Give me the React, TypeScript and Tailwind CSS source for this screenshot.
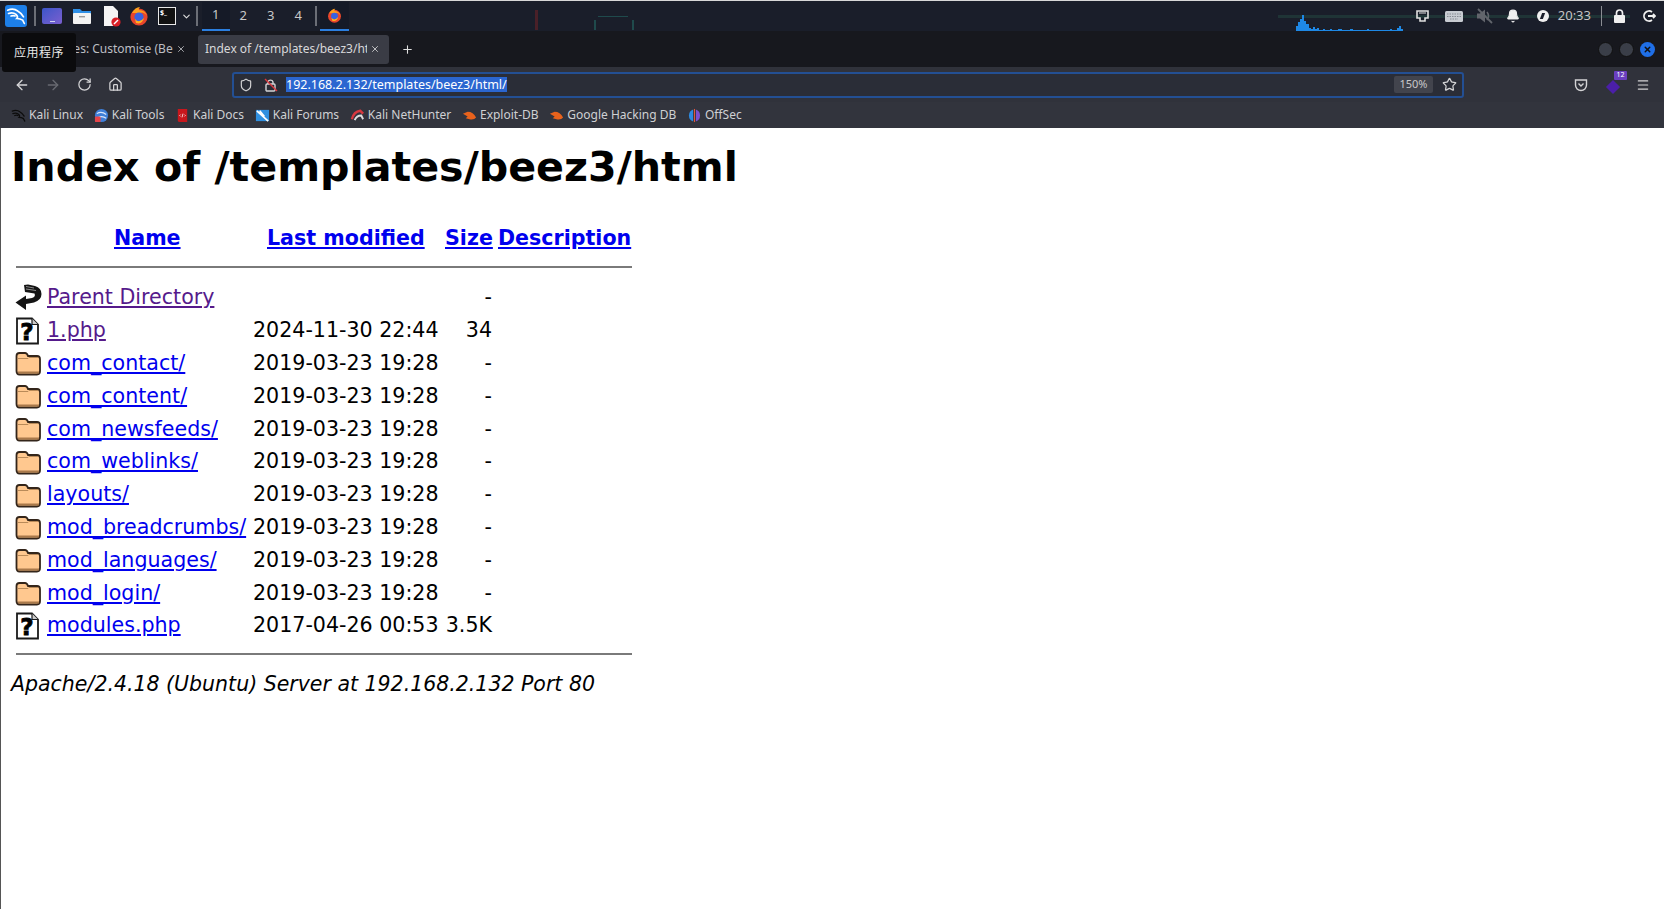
import { ArrowLeft, ArrowRight, RotateCw, Home, Shield, Star, Menu, Plus, X, ChevronDown, Bell } from "lucide-react"

const mono = "font-['DejaVu_Sans',sans-serif]"
const chrome = "font-['Noto_Sans','Noto_Sans_CJK_SC',sans-serif]"

function FolderIcon() {
  return (
    <svg width="26" height="26" viewBox="0 0 26 26">
      <path d="M1.5 6 Q1.5 3 4.5 3 H10 Q12 3 13 6 H22 Q25 6 25 9 V21 Q25 24.5 22 24.5 H4.5 Q1.5 24.5 1.5 21 Z" fill="#ffc88f" stroke="#33251a" strokeWidth="1.8" />
      <path d="M3 8.5 H13 L14 7.5 H23" stroke="#b98a58" strokeWidth="1" fill="none" />
      <path d="M3 22.5 H24" stroke="#a9794a" strokeWidth="2" />
    </svg>
  )
}

function UnknownIcon() {
  return (
    <svg width="25" height="28" viewBox="0 0 25 28">
      <path d="M2 1.5 H17 L23 7.5 V26.5 H2 Z" fill="#fff" stroke="#1a1a1a" strokeWidth="1.8" />
      <path d="M17 1.5 V7.5 H23" fill="#ccc" stroke="#1a1a1a" strokeWidth="1.2" />
      <text x="12" y="23" textAnchor="middle" fontSize="23" fontWeight="900" fontFamily="DejaVu Sans" stroke="#000" strokeWidth="0.8" fill="#000">?</text>
    </svg>
  )
}

function BackIcon() {
  return (
    <svg width="27" height="27" viewBox="0 0 27 27">
      <path d="M9 1 L13 0.5 L20 2 Q26.5 4 26.5 10 Q26.5 16 19 18.5 L11 20 V26 L0.5 18.5 L11 11.5 V15 L17 14 Q21 12.5 19.5 9.5 L10 8 Z" fill="#141414" />
      <path d="M11 2.5 L19 4 M11 5 L21 6.5" stroke="#999" strokeWidth="0.9" />
    </svg>
  )
}

function KaliDragon({ color = "#fff", size = 22 }: { color?: string; size?: number }) {
  return (
    <svg width={size} height={size} viewBox="0 0 24 24" fill="none" stroke={color} strokeWidth="2" strokeLinecap="round">
      <path d="M2 5 Q9 2 14 6 Q19 9 21 13" />
      <path d="M3 9 Q8 7 12 10 Q15 13 13 15 Q17 15 20 17 L22 21" />
      <path d="M6 12 Q9 11 11 12" />
    </svg>
  )
}

function Firefox({ size }: { size: number }) {
  return (
    <svg width={size} height={size} viewBox="0 0 20 20">
      <circle cx="10" cy="11" r="8.6" fill="#e8452c" />
      <path d="M3 7 Q6 1 11 1 Q9 3 10 4 Q16 4 18 10 Q15 5 11 7 Z" fill="#ff9f1c" />
      <circle cx="10" cy="11" r="4.6" fill="#3a62e0" />
      <path d="M6 13 Q10 18 15 12 Q13 19 7 17 Z" fill="#ffb01f" />
    </svg>
  )
}

function Favicon({ kind }: { kind: string }) {
  if (kind === "linux") return <KaliDragon color="#0c0c0c" size={15} />
  if (kind === "tools")
    return (
      <svg width="15" height="15" viewBox="0 0 16 16">
        <circle cx="8" cy="8" r="7" fill="#3f7fd8" />
        <path d="M3 6 Q8 3 13 7 M5 10 Q9 8 13 11" stroke="#dbe7fb" strokeWidth="1.2" fill="none" />
        <rect x="1" y="9" width="6" height="6" rx="1" fill="#e6444a" />
      </svg>
    )
  if (kind === "docs")
    return (
      <svg width="15" height="15" viewBox="0 0 16 16">
        <path d="M3 1 H13 V15 H5 Q3 15 3 13 Z" fill="#c8171d" />
        <path d="M6 7 L5 8 L6 9 M10 7 L11 8 L10 9 M8.5 6 L7.5 10" stroke="#fff" strokeWidth="0.8" fill="none" />
      </svg>
    )
  if (kind === "forums")
    return (
      <svg width="15" height="15" viewBox="0 0 16 16">
        <rect x="1" y="2" width="14" height="12" fill="#2f8fe0" />
        <path d="M2 3 L14 14 M5 3 L10 9" stroke="#fff" strokeWidth="1.8" />
      </svg>
    )
  if (kind === "hunter")
    return (
      <svg width="15" height="15" viewBox="0 0 16 16" fill="none">
        <path d="M2 12 Q4 4 11 3 L14 6" stroke="#d8383f" strokeWidth="2.6" />
        <path d="M5 13 Q7 8 12 8 L14 12" stroke="#ddd" strokeWidth="2" />
      </svg>
    )
  if (kind === "exploit")
    return (
      <svg width="15" height="15" viewBox="0 0 16 16">
        <path d="M1 6 L6 4 Q12 4 15 10 Q13 13 8 12 L4 11 L6 9 Z" fill="#e8621c" />
      </svg>
    )
  return (
    <svg width="15" height="15" viewBox="0 0 16 16">
      <path d="M6.5 1.5 A7 7 0 0 0 6.5 14.5 Z" fill="#2d8ae0" />
      <path d="M9.5 1.5 A7 7 0 0 1 9.5 14.5 Z" fill="#7b4fd0" />
      <rect x="7.4" y="1" width="1.2" height="14" fill="#e0573a" />
    </svg>
  )
}

const bookmarks = [
  { kind: "linux", label: "Kali Linux" },
  { kind: "tools", label: "Kali Tools" },
  { kind: "docs", label: "Kali Docs" },
  { kind: "forums", label: "Kali Forums" },
  { kind: "hunter", label: "Kali NetHunter" },
  { kind: "exploit", label: "Exploit-DB" },
  { kind: "exploit", label: "Google Hacking DB" },
  { kind: "offsec", label: "OffSec" },
]

const rows = [
  { icon: "back", name: "Parent Directory", date: "", size: "-", visited: true },
  { icon: "file", name: "1.php", date: "2024-11-30 22:44", size: "34", visited: true },
  { icon: "dir", name: "com_contact/", date: "2019-03-23 19:28", size: "-" },
  { icon: "dir", name: "com_content/", date: "2019-03-23 19:28", size: "-" },
  { icon: "dir", name: "com_newsfeeds/", date: "2019-03-23 19:28", size: "-" },
  { icon: "dir", name: "com_weblinks/", date: "2019-03-23 19:28", size: "-" },
  { icon: "dir", name: "layouts/", date: "2019-03-23 19:28", size: "-" },
  { icon: "dir", name: "mod_breadcrumbs/", date: "2019-03-23 19:28", size: "-" },
  { icon: "dir", name: "mod_languages/", date: "2019-03-23 19:28", size: "-" },
  { icon: "dir", name: "mod_login/", date: "2019-03-23 19:28", size: "-" },
  { icon: "file", name: "modules.php", date: "2017-04-26 00:53", size: "3.5K" },
]

// heights of the little network graph bars in the panel
const netBars = [5, 9, 12, 16, 10, 7, 3, 2, 4, 2, 3, 1, 1, 2, 1, 1, 2, 1, 1, 1, 2, 2, 1, 1, 1, 1, 2, 1, 1, 1, 1, 1, 1, 1, 2, 1, 1, 1, 1, 1, 1, 1, 1, 1, 1, 2, 1, 1, 3, 5, 2]

function TopPanel() {
  return (
    <div className="relative flex h-[31px] items-center border-t border-[#d8d8d8] bg-[#1a1e2a] pl-[5px] text-[#d5d5d5]">
      <div className="flex h-[22px] w-[22px] items-center justify-center rounded-[3px] bg-[#1d7fe8]">
        <KaliDragon size={20} />
      </div>
      <div className="ml-[7px] mr-[6px] h-[20px] w-[2px] bg-[#6b6e76]" />
      <div className="flex h-[16px] w-[20px] items-end justify-center rounded-[2px] bg-gradient-to-br from-[#3a55c8] to-[#7a5fd0]">
        <div className="mb-[2px] h-[1px] w-[5px] bg-[#cfd3f0]" />
      </div>
      <svg className="ml-[10px]" width="20" height="18" viewBox="0 0 20 18">
        <path d="M1 2 H8 L10 4 H19 V7 H1 Z" fill="#2e8fe6" />
        <rect x="1" y="6" width="18" height="11" rx="1" fill="#f2f2f2" />
        <rect x="7" y="9" width="6" height="1.4" fill="#999" />
      </svg>
      <svg className="ml-[10px]" width="20" height="22" viewBox="0 0 20 22">
        <path d="M2 1 H11 L16 6 V21 H2 Z" fill="#f5f5f5" />
        <circle cx="14" cy="17" r="4.6" fill="#d91f26" />
        <path d="M12 19 L16 15" stroke="#fff" strokeWidth="1.4" />
      </svg>
      <div className="ml-[7px]">
        <Firefox size={20} />
      </div>
      <div className="ml-[9px] flex h-[18px] w-[18px] border border-[#e8e8e8] bg-[#111] pl-[1px] text-[7px] leading-[9px] font-bold text-white">$_</div>
      <ChevronDown className="ml-[5px]" size={11} strokeWidth={2.5} color="#ddd" />
      <div className="mx-[4px] h-[20px] w-[2px] bg-[#6b6e76]" />
      <div className={`${chrome} flex text-[13px] text-[#c8c8c8]`}>
        <div className="flex h-[29px] w-[27.5px] items-center justify-center border-b-2 border-[#2b7fe0] bg-[#151a27]">1</div>
        <div className="flex h-[29px] w-[27.5px] items-center justify-center">2</div>
        <div className="flex h-[29px] w-[27.5px] items-center justify-center">3</div>
        <div className="flex h-[29px] w-[27.5px] items-center justify-center">4</div>
      </div>
      <div className="mx-[3px] h-[20px] w-[2px] bg-[#6b6e76]" />
      <div className="flex h-[29px] w-[29px] items-center justify-center border-b-2 border-[#2b7fe0] bg-[#151a27]">
        <Firefox size={15} />
      </div>

      {/* faint desktop graph showing through the panel */}
      <div className="absolute left-[535px] top-[9px] h-[20px] w-[3px] bg-[#4a2028]" />
      <div className="absolute left-[598px] top-[15px] h-[1px] w-[30px] bg-[#1f4a4c]" />
      <div className="absolute left-[594px] top-[19px] h-[10px] w-[2px] bg-[#1f4a4c]" />
      <div className="absolute left-[632px] top-[19px] h-[10px] w-[2px] bg-[#1f4a4c]" />
      <div className="absolute left-[1278px] top-[14px] h-[3px] w-[352px] bg-[#1f3436]" />
      <div className="absolute bottom-0 left-[1296px] flex h-[16px] items-end gap-[0px]">
        {netBars.map((h, i) => (
          <div key={i} className="w-[2.1px] bg-[#1e88e5]" style={{ height: h }} />
        ))}
      </div>

      <div className="relative ml-auto mr-[5px] flex items-center">
        <svg className="mr-[16px]" width="13" height="12" viewBox="0 0 13 12">
          <path d="M1 1 H12 V8 H9 V11 H4 V8 H1 Z" fill="none" stroke="#e0e0e0" strokeWidth="1.6" />
          <path d="M3 3 H10" stroke="#e0e0e0" strokeWidth="1" />
        </svg>
        <svg className="mr-[13px]" width="18" height="11" viewBox="0 0 18 11">
          <rect width="18" height="11" rx="1.5" fill="#c8ccd2" />
          <path d="M2 3 H16 M2 5.5 H16 M5 8 H13" stroke="#858a92" strokeWidth="1" strokeDasharray="1.5 1" />
        </svg>
        <svg className="mr-[13px]" width="17" height="16" viewBox="0 0 17 16">
          <path d="M1 5.5 H4 L9 1.5 V14.5 L4 10.5 H1 Z" fill="#62656c" />
          <path d="M11 4 Q14 8 11 12" fill="none" stroke="#62656c" strokeWidth="1.6" />
          <path d="M2 1 L16 15" stroke="#62656c" strokeWidth="1.8" />
        </svg>
        <Bell className="mr-[17px]" size={14} color="#f0f0f0" fill="#f0f0f0" />
        <div className="mr-[9px] flex h-[12px] w-[12px] items-center justify-center rounded-full bg-[#f0f0f0]">
          <div className="h-[6px] w-[3px] skew-x-[-20deg] bg-[#1a1e2a]" />
        </div>
        <span className={`${chrome} text-[13px] text-[#c4c4c4]`}>20:33</span>
        <div className="mx-[10px] h-[20px] w-[1px] bg-[#8a8d93]" />
        <svg className="ml-[1px] mr-[16px]" width="13" height="14" viewBox="0 0 13 14">
          <rect x="1" y="6" width="11" height="8" rx="1" fill="#f0f0f0" />
          <path d="M3.5 6 V4 A3 3 0 0 1 9.5 4 V6" fill="none" stroke="#f0f0f0" strokeWidth="1.7" />
        </svg>
        <svg className="mr-[3px]" width="14" height="14" viewBox="0 0 14 14" fill="none" stroke="#f0f0f0" strokeWidth="1.8">
          <path d="M10 3 A5 5 0 1 0 10 11" />
          <path d="M6 7 H13 M11 5 L13 7 L11 9" />
        </svg>
      </div>
    </div>
  )
}

function TabBar() {
  return (
    <div className={`${chrome} relative flex h-[36px] items-center bg-[#17181e] pl-[4px] text-[12px] text-[#bdbec2]`}>
      <div className="flex h-[30px] w-[190px] items-center pl-[24px] pr-[4px]">
        <span className="w-[146px] overflow-hidden whitespace-nowrap">Templates: Customise (Be</span>
        <X className="ml-auto mr-[4px]" size={10} />
      </div>
      <div className="ml-[4px] flex h-[29px] w-[191px] items-center rounded-[3px] bg-[#3a3c45] pl-[7px] pr-[9px] text-[#d8d8da]">
        <span className="w-[162px] overflow-hidden whitespace-nowrap">Index of /templates/beez3/ht</span>
        <X className="ml-auto" size={10} />
      </div>
      <Plus className="ml-[12px]" size={13} color="#e0e0e0" />
      <div className="ml-auto mr-[9px] flex items-center gap-[6px]">
        <div className="h-[15px] w-[15px] rounded-full border border-[#111] bg-[#3a3e48]" />
        <div className="h-[15px] w-[15px] rounded-full border border-[#111] bg-[#3a3e48]" />
        <div className="flex h-[15px] w-[15px] items-center justify-center rounded-full bg-[#1f6fe8]">
          <X size={9} strokeWidth={4} color="#111" />
        </div>
      </div>
      <div className="absolute left-[2px] top-[2px] flex h-[39px] w-[74px] items-center justify-center rounded-[3px] bg-[#0b0b0d] text-[12px] tracking-[0.5px] text-[#e8e8e8]">
        应用程序
      </div>
    </div>
  )
}

function NavBar() {
  return (
    <div className="flex h-[35px] items-center bg-[#30323b] text-[#d4d4d6]">
      <ArrowLeft className="ml-[14px]" size={16} />
      <ArrowRight className="ml-[15px]" size={16} color="#686a72" />
      <RotateCw className="ml-[16px]" size={15} />
      <Home className="ml-[16px]" size={15} />
      <div className={`${chrome} ml-[109px] flex h-[26px] w-[1232px] items-center rounded-[3px] border-2 border-[#234f93] bg-[#2a2d37] text-[12.5px]`}>
        <Shield className="ml-[5px]" size={14} />
        <svg className="ml-[11px]" width="14" height="14" viewBox="0 0 14 14" fill="none" stroke="#d4d4d6" strokeWidth="1.4">
          <rect x="2" y="6" width="9" height="7" rx="1" />
          <path d="M4 6 V4 A2.6 2.6 0 0 1 9 4 V6" />
          <path d="M1 1 L13 13" stroke="#d8383f" />
        </svg>
        <span className="ml-[8px] bg-[#2b66d0] leading-[15px] text-white">192.168.2.132/templates/beez3/html/</span>
        <span className="ml-auto flex h-[17px] w-[39px] items-center justify-center rounded-[2px] bg-[#42444d] text-[11px] text-[#c8c8ca]">150%</span>
        <Star className="ml-[9px] mr-[5px]" size={15} />
      </div>
      <div className="ml-auto flex items-center">
        <svg width="14" height="14" viewBox="0 0 14 14" fill="none" stroke="#d4d4d6" strokeWidth="1.4">
          <path d="M1.5 2 H12.5 V7 A5.5 5.5 0 0 1 1.5 7 Z" />
          <path d="M4.5 5.5 L7 8 L9.5 5.5" />
        </svg>
        <div className="relative ml-[18px] h-[16px] w-[18px]">
          <div className="absolute left-[2px] top-[5px] h-[10px] w-[10px] rotate-45 bg-[#4b1fa8]" />
          <div className="absolute right-[-3px] top-[-6px] flex h-[9px] w-[13px] items-center justify-center rounded-[1px] bg-[#6a3fc0] text-[7px] text-white">12</div>
        </div>
        <Menu className="ml-[12px] mr-[14px]" size={14} />
      </div>
    </div>
  )
}

function BookmarksBar() {
  return (
    <div className={`${chrome} flex h-[26px] items-center gap-[10.7px] bg-[#32343d] pl-[11px] text-[12px] text-[#cfd0d3]`}>
      {bookmarks.map((b) => (
        <div key={b.label} className="flex items-center gap-[3px] whitespace-nowrap">
          <Favicon kind={b.kind} />
          {b.label}
        </div>
      ))}
    </div>
  )
}

function RowIcon({ kind }: { kind: string }) {
  if (kind === "back") return <BackIcon />
  if (kind === "file") return <UnknownIcon />
  return <FolderIcon />
}

export default function App() {
  return (
    <div className="flex h-[909px] w-[1664px] flex-col overflow-hidden bg-white">
      <TopPanel />
      <TabBar />
      <NavBar />
      <BookmarksBar />
      <div className={`${mono} flex-1 border-l border-[#555] pl-[10px] text-[20.6px] text-black`}>
        <h1 className="mt-[11px] h-[56px] text-[41.2px] font-bold leading-[56px]">Index of /templates/beez3/html</h1>
        <div className="mt-[27px] ml-[5px] w-[616px]">
          <div className="flex h-[33px] items-center font-bold text-[#0000ee] underline">
            <span className="w-[251px] pl-[98px]">Name</span>
            <span className="w-[178px] whitespace-nowrap">Last modified</span>
            <span className="w-[53px]">Size</span>
            <span>Description</span>
          </div>
          <div className="mt-[11px] h-[2px] bg-[#7a7a7a]" />
          <div className="mt-[13.5px]">
            {rows.map((r) => (
              <div key={r.name} className="flex h-[32.8px] items-center">
                <div className="ml-[-1px] flex w-[32px] justify-start">
                  <RowIcon kind={r.icon} />
                </div>
                <a href="#" className={`w-[206px] whitespace-nowrap underline ${r.visited ? "text-[#551a8b]" : "text-[#0000ee]"}`}>
                  {r.name}
                </a>
                <span className="w-[187px] whitespace-nowrap">{r.date}</span>
                <span className="w-[52px] text-right">{r.size}</span>
              </div>
            ))}
          </div>
          <div className="mt-[11px] h-[2px] bg-[#7a7a7a]" />
        </div>
        <address className="mt-[13px] h-[33px] text-[20.5px] leading-[33px] italic">Apache/2.4.18 (Ubuntu) Server at 192.168.2.132 Port 80</address>
      </div>
    </div>
  )
}
